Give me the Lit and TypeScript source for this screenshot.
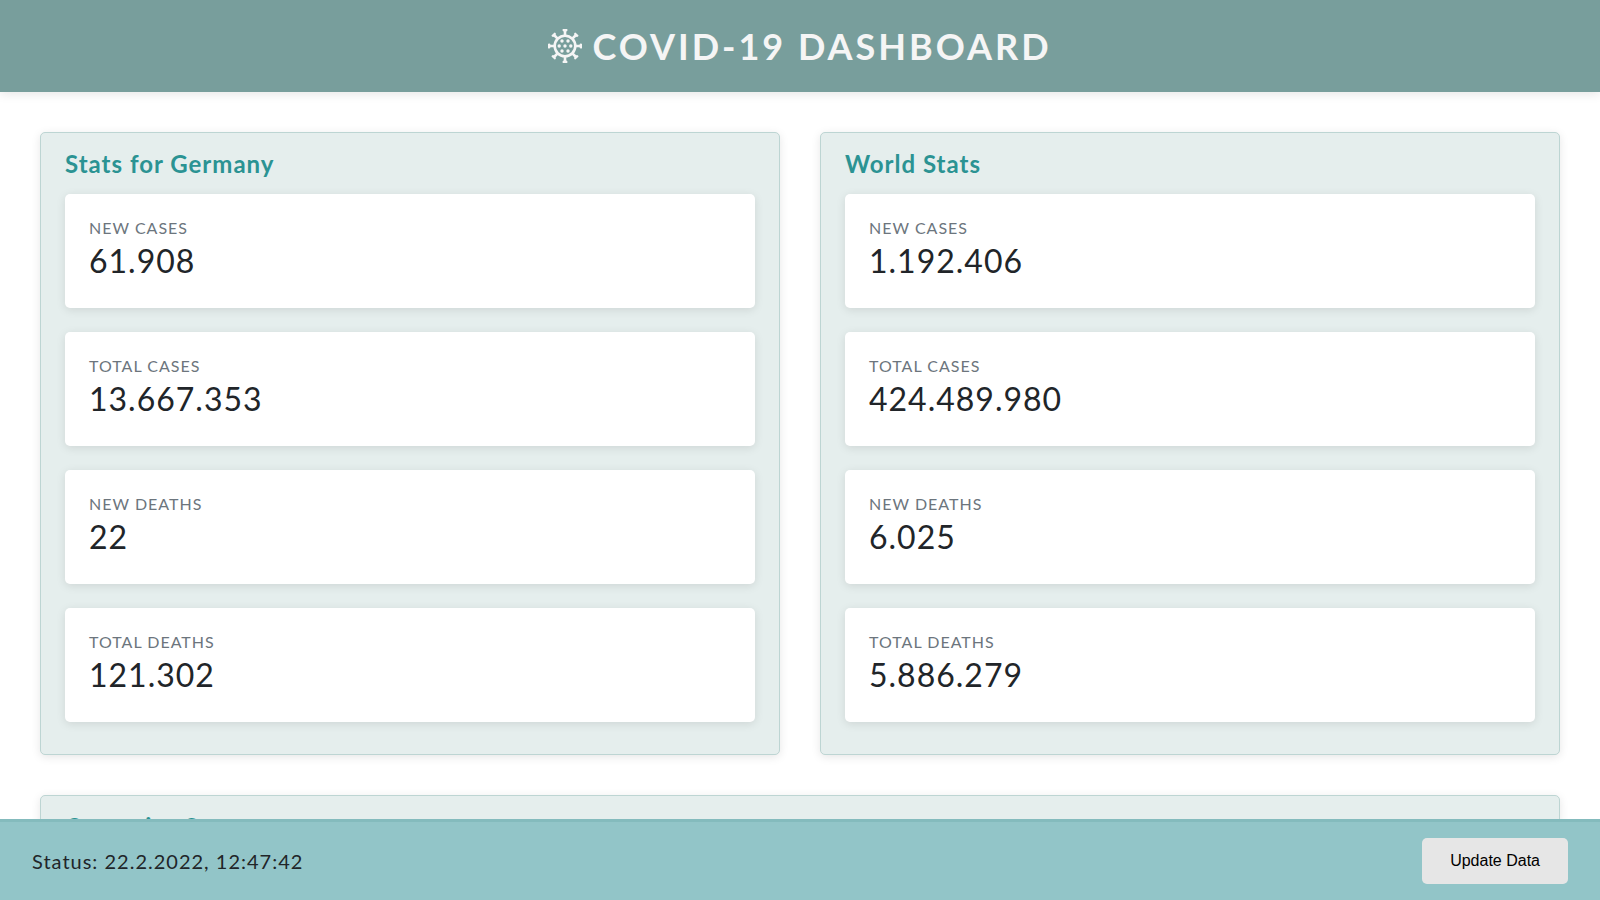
import { LitElement, html, css, svg } from "lit";
import { customElement, property, state } from "lit/decorators.js";

interface Stat {
  label: string;
  value: number;
}

const GERMANY: Stat[] = [
  { label: "New Cases", value: 61908 },
  { label: "Total Cases", value: 13667353 },
  { label: "New Deaths", value: 22 },
  { label: "Total Deaths", value: 121302 },
];

const WORLD: Stat[] = [
  { label: "New Cases", value: 1192406 },
  { label: "Total Cases", value: 424489980 },
  { label: "New Deaths", value: 6025 },
  { label: "Total Deaths", value: 5886279 },
];

const groupDigits = (n: number) => String(n).replace(/\B(?=(\d{3})+$)/g, ".");

@customElement("virus-icon")
export class VirusIcon extends LitElement {
  static styles = css`
    :host {
      display: block;
      width: 34px;
      height: 34px;
    }
    .icon {
      display: block;
      width: 100%;
      height: 100%;
    }
  `;

  render() {
    const spikes = [0, 45, 90, 135, 180, 225, 270, 315];
    const dots = [
      [17, 17], [11.2, 17], [22.8, 17],
      [14, 12], [20, 12], [14, 22], [20, 22],
    ];
    return html`<svg class="icon" viewBox="0 0 34 34" fill="none" aria-hidden="true">
      <circle cx="17" cy="17" r="10.3" stroke="currentColor" stroke-width="2.6" />
      ${spikes.map(
        (a) => svg`<path transform="rotate(${a} 17 17)" fill="currentColor"
          d="M15.1 0H18.9Q19.5 0 19.5 1.1Q19.5 2.3 18.3 2.5V7H15.7V2.5Q14.5 2.3 14.5 1.1Q14.5 0 15.1 0Z" />`
      )}
      ${dots.map(([x, y]) => svg`<circle cx=${x} cy=${y} r="1.7" fill="currentColor" />`)}
    </svg>`;
  }
}

@customElement("stats-panel")
export class StatsPanel extends LitElement {
  @property() heading = "";
  @property({ attribute: false }) stats: Stat[] = [];

  static styles = css`
    :host {
      display: block;
      box-sizing: border-box;
      padding: 12px 24px 32px;
      background: #e5eeed;
      border: 1px solid #bdd5d3;
      border-radius: 5px;
      box-shadow: 0 2px 10px rgba(0, 0, 0, 0.1);
    }
    .heading {
      margin: 0 0 11px;
      color: #2b9393;
      font-size: 24px;
      line-height: 38px;
      font-weight: 700;
      letter-spacing: 1px;
    }
    .list {
      display: grid;
      gap: 24px;
      margin: 0;
    }
    .card {
      padding: 24px;
      background: #fff;
      border-radius: 5px;
      box-shadow: 0 2px 10px rgba(0, 0, 0, 0.1);
    }
    .label {
      color: #6c757d;
      font-size: 16px;
      line-height: 20px;
      letter-spacing: 1px;
      text-transform: uppercase;
    }
    .value {
      margin: 0;
      font-size: 32px;
      line-height: 46px;
      letter-spacing: 1px;
    }
  `;

  render() {
    return html`
      <h2 class="heading">${this.heading}</h2>
      <dl class="list">
        ${this.stats.map(
          (s) => html`<div class="card">
            <dt class="label">${s.label}</dt>
            <dd class="value">${groupDigits(s.value)}</dd>
          </div>`
        )}
      </dl>
    `;
  }
}

@customElement("app-root")
export class AppRoot extends LitElement {
  @state() private lastUpdate = "22.2.2022, 12:47:42";

  static styles = css`
    :host {
      display: flex;
      flex-direction: column;
      height: 100vh;
      background: #fff;
      color: #212529;
      font-family: Lato, sans-serif;
    }
    .header {
      z-index: 1;
      flex: none;
      display: flex;
      align-items: center;
      justify-content: center;
      gap: 10px;
      padding: 22px 32px;
      background: #789e9c;
      color: #f5f5f5;
      box-shadow: 0 2px 10px rgba(0, 0, 0, 0.1);
    }
    .title {
      margin: 0;
      font-size: 36px;
      line-height: 48px;
      font-weight: 700;
      letter-spacing: 3px;
      text-transform: uppercase;
    }
    .main {
      flex: 1;
      min-height: 0;
      overflow: auto;
      scrollbar-width: none;
    }
    .grid {
      display: grid;
      grid-template-columns: 1fr 1fr;
      gap: 40px;
      padding: 40px;
    }
    .wide {
      grid-column: 1 / -1;
    }
    .footer {
      flex: none;
      display: flex;
      align-items: center;
      justify-content: space-between;
      padding: 16px 32px;
      background: #92c5c8;
      border-top: 3px solid #84bbbd;
    }
    .status {
      margin: 0;
      font-size: 20px;
      line-height: 30px;
      letter-spacing: 1px;
    }
    .update {
      padding: 14px 28px;
      border: 0;
      border-radius: 5px;
      background: #e6e6e6;
      color: #000;
      font-family: "Liberation Sans", Arial, sans-serif;
      font-size: 16px;
      line-height: 18px;
      cursor: pointer;
    }
  `;

  private refresh() {
    const now = new Date();
    this.lastUpdate = `${now.toLocaleDateString("de-DE")}, ${now.toLocaleTimeString("de-DE")}`;
  }

  render() {
    return html`
      <header class="header">
        <virus-icon></virus-icon>
        <h1 class="title">Covid-19 Dashboard</h1>
      </header>
      <main class="main">
        <div class="grid">
          <stats-panel heading="Stats for Germany" .stats=${GERMANY}></stats-panel>
          <stats-panel heading="World Stats" .stats=${WORLD}></stats-panel>
          <stats-panel class="wide" heading="Countries Stats"></stats-panel>
        </div>
      </main>
      <footer class="footer">
        <p class="status">Status: ${this.lastUpdate}</p>
        <button class="update" type="button" @click=${this.refresh}>Update Data</button>
      </footer>
    `;
  }
}
